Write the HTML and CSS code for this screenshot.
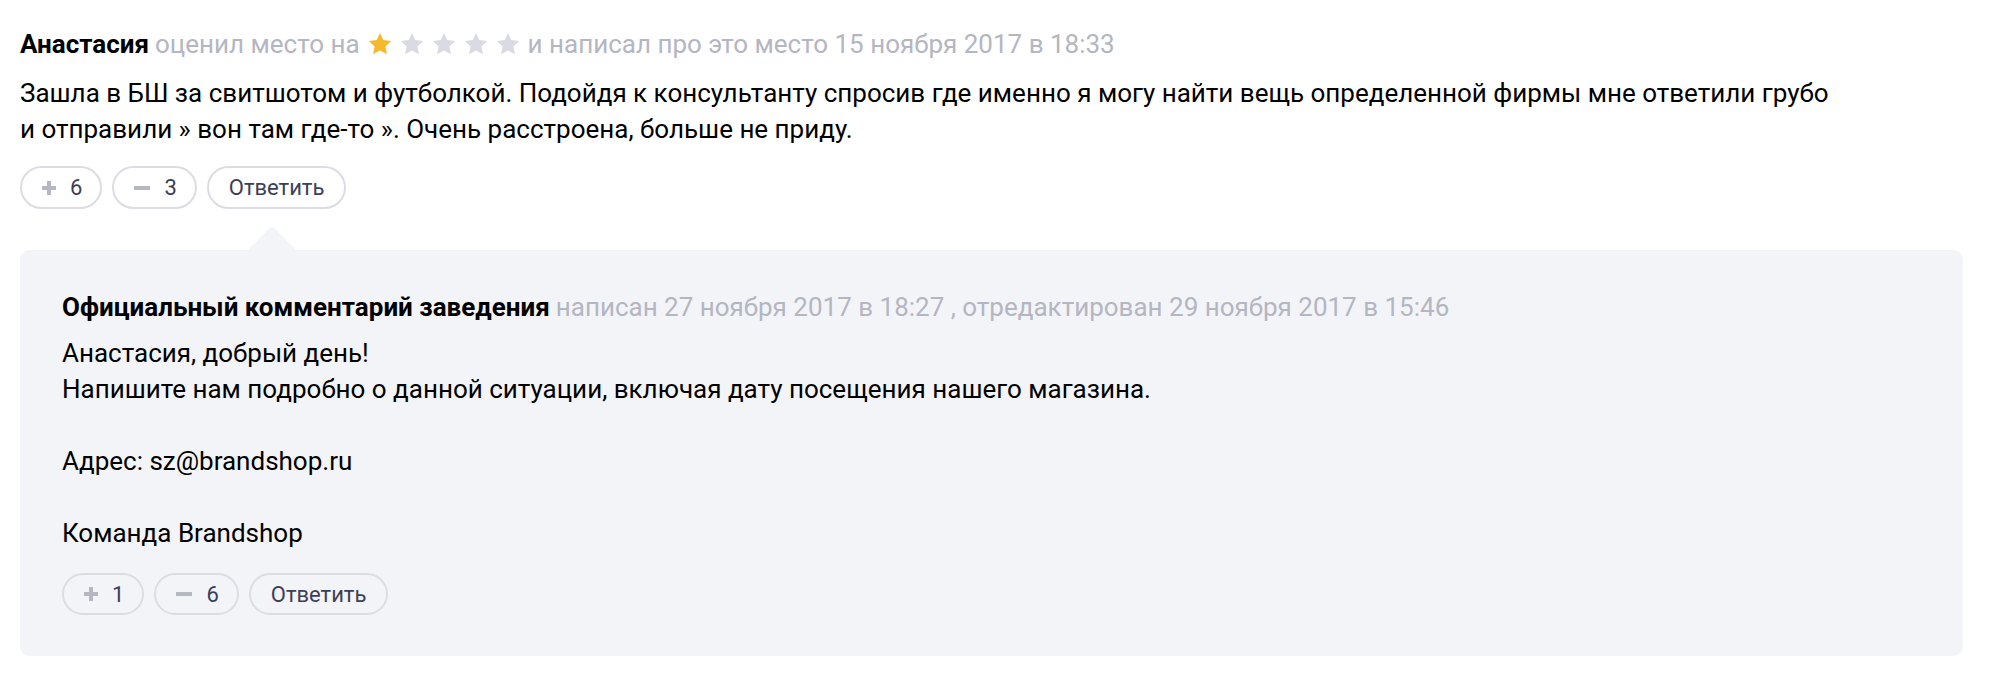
FILE: index.html
```html
<!DOCTYPE html>
<html lang="ru">
<head>
<meta charset="utf-8">
<title>Отзыв</title>
<link rel="stylesheet" href="styles.css">
</head>
<body>
<div class="review">
  <div class="review-head">
    <span class="author">Анастасия</span>
    <span class="meta">оценил место на</span>
    <span class="stars">
      <svg class="star on" viewBox="0 0 24 24"><path d="M12 1.8l3.1 6.6 7.2.9-5.3 5 1.4 7.1L12 17.9l-6.4 3.5L7 14.3l-5.3-5 7.2-.9z"/></svg>
      <svg class="star" viewBox="0 0 24 24"><path d="M12 1.8l3.1 6.6 7.2.9-5.3 5 1.4 7.1L12 17.9l-6.4 3.5L7 14.3l-5.3-5 7.2-.9z"/></svg>
      <svg class="star" viewBox="0 0 24 24"><path d="M12 1.8l3.1 6.6 7.2.9-5.3 5 1.4 7.1L12 17.9l-6.4 3.5L7 14.3l-5.3-5 7.2-.9z"/></svg>
      <svg class="star" viewBox="0 0 24 24"><path d="M12 1.8l3.1 6.6 7.2.9-5.3 5 1.4 7.1L12 17.9l-6.4 3.5L7 14.3l-5.3-5 7.2-.9z"/></svg>
      <svg class="star" viewBox="0 0 24 24"><path d="M12 1.8l3.1 6.6 7.2.9-5.3 5 1.4 7.1L12 17.9l-6.4 3.5L7 14.3l-5.3-5 7.2-.9z"/></svg>
    </span>
    <span class="meta">и написал про это место 15 ноября 2017 в 18:33</span>
  </div>
  <p class="review-text">Зашла в БШ за свитшотом и футболкой. Подойдя к консультанту спросив где именно я могу найти вещь определенной фирмы мне ответили грубо и отправили » вон там где-то ». Очень расстроена, больше не приду.</p>
  <div class="actions">
    <button class="pill vote"><svg class="ico" viewBox="0 0 14 14"><path d="M5 0h4v5h5v4H9v5H5V9H0V5h5z"/></svg><span>6</span></button>
    <button class="pill vote"><svg class="ico minus" viewBox="0 0 16 14"><path d="M0 5h16v4H0z"/></svg><span>3</span></button>
    <button class="pill reply">Ответить</button>
  </div>

  <div class="answer">
    <div class="answer-head">
      <span class="author">Официальный комментарий заведения</span>
      <span class="meta">написан 27 ноября 2017 в 18:27 , отредактирован 29 ноября 2017 в 15:46</span>
    </div>
    <div class="answer-text">
      <p>Анастасия, добрый день!<br>Напишите нам подробно о данной ситуации, включая дату посещения нашего магазина.<br><br>Адрес: sz@brandshop.ru<br><br>Команда Brandshop</p>
    </div>
    <div class="actions answer-actions">
      <button class="pill vote"><svg class="ico" viewBox="0 0 14 14"><path d="M5 0h4v5h5v4H9v5H5V9H0V5h5z"/></svg><span>1</span></button>
      <button class="pill vote"><svg class="ico minus" viewBox="0 0 16 14"><path d="M0 5h16v4H0z"/></svg><span>6</span></button>
      <button class="pill reply">Ответить</button>
    </div>
  </div>
</div>
</body>
</html>
```

FILE: styles.css
```css
* { box-sizing: border-box; }

body {
  margin: 0;
  background: #ffffff;
  font-family: Roboto, "Noto Sans", Arial, sans-serif;
  font-size: 26px;
  line-height: 36px;
  color: #000000;
}

.review {
  margin: 0 27px 0 20px;
  padding-top: 26px;
}

.review-head,
.answer-head {
  display: flex;
  align-items: center;
  gap: 6px;
  white-space: nowrap;
}

.author {
  font-weight: 700;
  color: #000000;
}

.meta {
  color: #b4b6c1;
}

.stars {
  display: inline-flex;
  align-items: center;
  gap: 6px;
  margin: 0 1px;
}

.star {
  width: 26px;
  height: 26px;
  fill: #dadbe2;
}

.star.on {
  fill: #f6b92d;
}

.review-text {
  margin: 13px 0 0 0;
  max-width: 1815px;
}

.actions {
  display: flex;
  gap: 10px;
  margin-top: 19px;
}

.pill {
  display: inline-flex;
  align-items: center;
  gap: 14px;
  height: 43px;
  padding: 0 20px;
  border: 2px solid #dcdde3;
  border-radius: 22px;
  background: transparent;
  font-family: Roboto, "Noto Sans", Arial, sans-serif;
  font-size: 22px;
  color: #3c4056;
  cursor: pointer;
}

.pill.vote {
  padding: 0 18px 0 20px;
}

.ico {
  width: 14px;
  height: 14px;
  fill: #b6b8c1;
}

.ico.minus {
  width: 16px;
}

.answer {
  position: relative;
  margin-top: 41px;
  padding: 39px 42px 41px 42px;
  background: #f3f4f8;
  border-radius: 10px;
}

.answer::before {
  content: "";
  position: absolute;
  left: 235px;
  top: -17px;
  width: 34px;
  height: 34px;
  background: #f3f4f8;
  border-radius: 3px;
  transform: rotate(45deg);
}

.answer-text p {
  margin: 10px 0 0 0;
}

.answer-actions {
  margin-top: 22px;
}

.answer-actions .pill {
  height: 42px;
}
```
